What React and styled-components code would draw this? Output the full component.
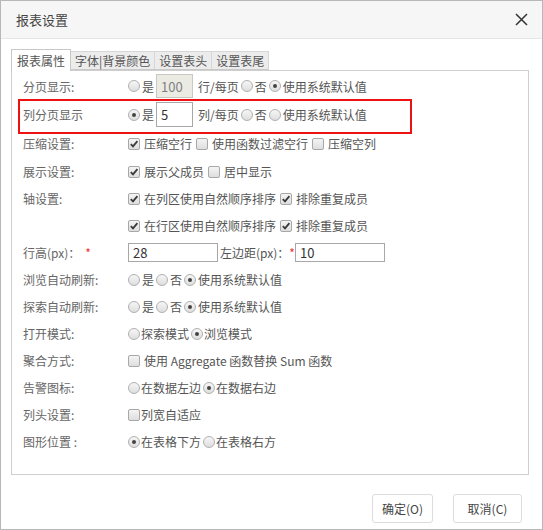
import React from "react";
import styled, { createGlobalStyle } from "styled-components";

const GlobalStyle = createGlobalStyle`
  html, body {
    margin: 0;
    padding: 0;
    background: #ffffff;
  }
  body {
    font-family: "Noto Sans CJK SC", "Noto Sans", sans-serif;
    font-size: 12px;
    color: #555;
  }
`;

const Dialog = styled.div`
  width: 543px;
  height: 530px;
  box-sizing: border-box;
  border: 1px solid #b8b8b8;
  background: #fff;
  display: flex;
  flex-direction: column;
`;

const Header = styled.div`
  height: 37px;
  flex: none;
  background: #f6f6f6;
  border-bottom: 1px solid #e6e6e6;
  display: flex;
  align-items: center;
  justify-content: space-between;
  padding: 0 14px 0 15px;
`;

const Title = styled.div`
  font-size: 13px;
  color: #444;
`;

const Body = styled.div`
  flex: 1;
  padding: 10px 13px 0 10px;
  display: flex;
  flex-direction: column;
`;

const TabBar = styled.div`
  display: flex;
  align-items: flex-end;
  height: 21px;
  position: relative;
  z-index: 1;
`;

const Tab = styled.div`
  box-sizing: border-box;
  height: ${(p) => (p.$active ? "22px" : "19px")};
  padding: ${(p) => (p.$active ? "0 5px 0 5px" : "0 4px")};
  margin-bottom: ${(p) => (p.$active ? "-1px" : "0")};
  border: 1px solid ${(p) => (p.$active ? "#c8c8c8" : "#d6d6d6")};
  border-bottom: ${(p) => (p.$active ? "none" : "1px solid #c8c8c8")};
  border-left: ${(p) => (p.$first ? "" : "none")};
  background: ${(p) => (p.$active ? "#fff" : "#ececec")};
  color: #555;
  font-size: 12px;
  display: flex;
  align-items: center;
  line-height: 1;
`;

const Panel = styled.div`
  box-sizing: border-box;
  height: 405px;
  border: 1px solid #cfcfcf;
  padding: 1px 0 0 11px;
  display: flex;
  flex-direction: column;
`;

const Row = styled.div`
  height: ${(p) => p.$h || 27}px;
  flex: none;
  display: flex;
  align-items: center;
  position: relative;
  ${(p) =>
    p.$marked &&
    `
    &::after {
      content: "";
      position: absolute;
      left: -5px;
      top: -1px;
      width: 394px;
      bottom: -5px;
      border: 2px solid #ee1111;
      box-sizing: border-box;
    }
  `}
`;

const Label = styled.div`
  width: 105px;
  flex: none;
  color: #666;
  white-space: nowrap;
`;

const Required = styled.span`
  color: #e33;
  margin-left: ${(p) => (p.$ml == null ? 5 : p.$ml)}px;
  margin-right: ${(p) => p.$mr || 0}px;
`;

const Controls = styled.div`
  display: flex;
  align-items: center;
  white-space: nowrap;
  color: #555;
`;

const Option = styled.span`
  display: inline-flex;
  align-items: center;
  gap: ${(p) => (p.$gap == null ? 2 : p.$gap)}px;
  margin-right: ${(p) => (p.$mr == null ? 2 : p.$mr)}px;
`;

const RadioDot = styled.span`
  width: 12px;
  height: 12px;
  box-sizing: border-box;
  border-radius: 50%;
  border: 1px solid #b0b0b0;
  background: linear-gradient(#f6f6f6, #dedede);
  display: inline-flex;
  align-items: center;
  justify-content: center;
  flex: none;
  &::after {
    content: "";
    width: 4px;
    height: 4px;
    border-radius: 50%;
    background: ${(p) => (p.$on ? "#444" : "transparent")};
  }
`;

const CheckBox = styled.span`
  width: 12px;
  height: 12px;
  box-sizing: border-box;
  border-radius: 2px;
  border: 1px solid #a8a8a8;
  background: linear-gradient(#f4f4f4, #dedede);
  display: inline-flex;
  align-items: center;
  justify-content: center;
  flex: none;
`;

const TextField = styled.div`
  box-sizing: border-box;
  width: ${(p) => p.$w}px;
  height: ${(p) => p.$h}px;
  border: 1px solid ${(p) => (p.$disabled ? "#c9c9c2" : "#a8a8a8")};
  background: ${(p) => (p.$disabled ? "#ebebe4" : "#fff")};
  color: ${(p) => (p.$disabled ? "#808080" : "#333")};
  font-size: 13px;
  padding-left: 4px;
  display: flex;
  align-items: center;
  margin-right: ${(p) => p.$mr || 0}px;
`;

const Footer = styled.div`
  display: flex;
  justify-content: flex-end;
  gap: 20px;
  padding: 19px 7px 0 0;
`;

const Button = styled.div`
  box-sizing: border-box;
  width: ${(p) => p.$w}px;
  height: 29px;
  border: 1px solid #dcdcdc;
  border-radius: 3px;
  background: #fff;
  color: #444;
  display: flex;
  align-items: center;
  justify-content: center;
  font-size: 12px;
`;

const Radio = ({ on, children, gap, mr }) => (
  <Option $gap={gap} $mr={mr}>
    <RadioDot $on={on} />
    {children}
  </Option>
);

const Check = ({ on, children, mr, gap }) => (
  <Option $gap={gap == null ? 4 : gap} $mr={mr == null ? 4 : mr}>
    <CheckBox>
      {on && (
        <svg width="10" height="10" viewBox="0 0 10 10">
          <path d="M1.8 5.2 L4 7.4 L8.4 2.2" fill="none" stroke="#3a3a3a" strokeWidth="1.8" />
        </svg>
      )}
    </CheckBox>
    {children}
  </Option>
);

const CloseIcon = () => (
  <svg width="13" height="13" viewBox="0 0 13 13">
    <path d="M1 1 L12 12 M12 1 L1 12" stroke="#333" strokeWidth="1.5" fill="none" />
  </svg>
);

export default function App() {
  return (
    <>
      <GlobalStyle />
      <Dialog>
        <Header>
          <Title>报表设置</Title>
          <CloseIcon />
        </Header>
        <Body>
          <TabBar>
            <Tab $active $first>报表属性</Tab>
            <Tab>字体|背景颜色</Tab>
            <Tab>设置表头</Tab>
            <Tab>设置表尾</Tab>
          </TabBar>
          <Panel>
            <Row $h={28}>
              <Label>分页显示:</Label>
              <Controls>
                <Radio>是</Radio>
                <TextField $w={37} $h={24} $disabled $mr={5}>100</TextField>
                <Option>行/每页</Option>
                <Radio>否</Radio>
                <Radio on>使用系统默认值</Radio>
              </Controls>
            </Row>
            <Row $h={29} $marked>
              <Label>列分页显示</Label>
              <Controls>
                <Radio on>是</Radio>
                <TextField $w={37} $h={25} $mr={5}>5</TextField>
                <Option>列/每页</Option>
                <Radio>否</Radio>
                <Radio>使用系统默认值</Radio>
              </Controls>
            </Row>
            <Row $h={29}>
              <Label>压缩设置:</Label>
              <Controls>
                <Check on>压缩空行</Check>
                <Check>使用函数过滤空行</Check>
                <Check>压缩空列</Check>
              </Controls>
            </Row>
            <Row>
              <Label>展示设置:</Label>
              <Controls>
                <Check on>展示父成员</Check>
                <Check>居中显示</Check>
              </Controls>
            </Row>
            <Row>
              <Label>轴设置:</Label>
              <Controls>
                <Check on>在列区使用自然顺序排序</Check>
                <Check on>排除重复成员</Check>
              </Controls>
            </Row>
            <Row>
              <Label />
              <Controls>
                <Check on>在行区使用自然顺序排序</Check>
                <Check on>排除重复成员</Check>
              </Controls>
            </Row>
            <Row>
              <Label>
                行高(px)：<Required>*</Required>
              </Label>
              <Controls>
                <TextField $w={90} $h={19} $mr={2}>28</TextField>
                <Option $mr={0}>左边距(px)：</Option>
                <Required $ml={0} $mr={0}>*</Required>
                <TextField $w={90} $h={19}>10</TextField>
              </Controls>
            </Row>
            <Row>
              <Label>浏览自动刷新:</Label>
              <Controls>
                <Radio>是</Radio>
                <Radio>否</Radio>
                <Radio on>使用系统默认值</Radio>
              </Controls>
            </Row>
            <Row>
              <Label>探索自动刷新:</Label>
              <Controls>
                <Radio>是</Radio>
                <Radio>否</Radio>
                <Radio on>使用系统默认值</Radio>
              </Controls>
            </Row>
            <Row>
              <Label>打开模式:</Label>
              <Controls>
                <Radio gap={1}>探索模式</Radio>
                <Radio gap={1} on>浏览模式</Radio>
              </Controls>
            </Row>
            <Row>
              <Label>聚合方式:</Label>
              <Controls>
                <Check>使用 Aggregate 函数替换 Sum 函数</Check>
              </Controls>
            </Row>
            <Row>
              <Label>告警图标:</Label>
              <Controls>
                <Radio gap={1}>在数据左边</Radio>
                <Radio gap={1} on>在数据右边</Radio>
              </Controls>
            </Row>
            <Row>
              <Label>列头设置:</Label>
              <Controls>
                <Check gap={1}>列宽自适应</Check>
              </Controls>
            </Row>
            <Row>
              <Label>图形位置 :</Label>
              <Controls>
                <Radio gap={1} on>在表格下方</Radio>
                <Radio gap={1}>在表格右方</Radio>
              </Controls>
            </Row>
          </Panel>
          <Footer>
            <Button $w={61}>确定(O)</Button>
            <Button $w={69}>取消(C)</Button>
          </Footer>
        </Body>
      </Dialog>
    </>
  );
}
